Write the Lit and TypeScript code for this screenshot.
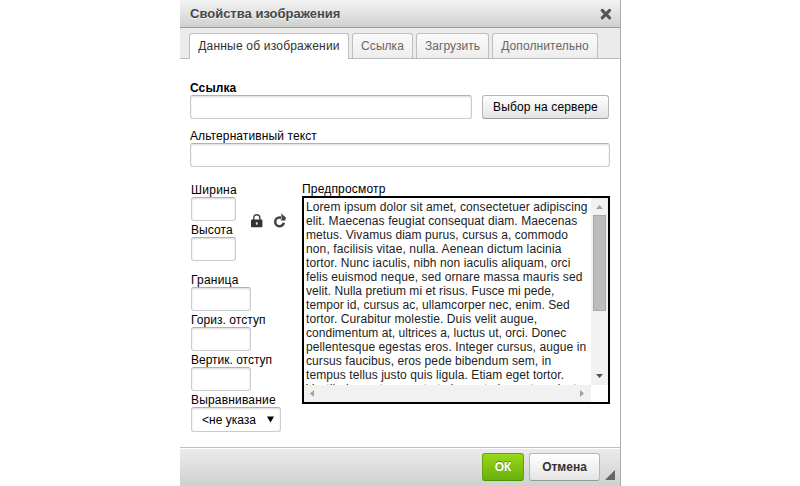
import { LitElement, html, css } from "lit";
import { customElement, property } from "lit/decorators.js";

const TABS = [
  { label: "Данные об изображении", width: 160, active: true, spacing: 0.2 },
  { label: "Ссылка", width: 61, active: false, spacing: 0.05 },
  { label: "Загрузить", width: 73, active: false, spacing: 0 },
  { label: "Дополнительно", width: 106, active: false, spacing: 0.09 },
];

const PREVIEW: [string, number][] = [
  ["Lorem ipsum dolor sit amet, consectetuer adipiscing", 4.7],
  ["elit. Maecenas feugiat consequat diam. Maecenas", 4.5],
  ["metus. Vivamus diam purus, cursus a, commodo", 2.7],
  ["non, facilisis vitae, nulla. Aenean dictum lacinia", 6],
  ["tortor. Nunc iaculis, nibh non iaculis aliquam, orci", 5],
  ["felis euismod neque, sed ornare massa mauris sed", 5],
  ["velit. Nulla pretium mi et risus. Fusce mi pede,", 3],
  ["tempor id, cursus ac, ullamcorper nec, enim. Sed", 3],
  ["tortor. Curabitur molestie. Duis velit augue,", 4.5],
  ["condimentum at, ultrices a, luctus ut, orci. Donec", 1.5],
  ["pellentesque egestas eros. Integer cursus, augue in", 4.7],
  ["cursus faucibus, eros pede bibendum sem, in", 3.7],
  ["tempus tellus justo quis ligula. Etiam eget tortor.", 4],
  ["Vestibulum rutrum, est ut placerat elementum, lectus", 4],
];

@customElement("text-field")
export class TextField extends LitElement {
  @property() label = "";
  @property({ type: Number }) width = 60;
  @property({ type: Number }) spacing = 0;
  @property({ type: Boolean }) strong = false;

  static styles = css`
    :host { display: block; }
    .label { height: 14px; line-height: 14px; white-space: nowrap; }
    .strong { font-weight: bold; }
    .box {
      box-sizing: border-box;
      height: 24px;
      border: 1px solid #c9cccf;
      border-top-color: #aeb3b9;
      border-radius: 3px;
      background: #fff;
      box-shadow: 0 1px 2px rgba(0, 0, 0, 0.15) inset;
    }
  `;

  render() {
    return html`
      <div class="label ${this.strong ? "strong" : ""}" style="letter-spacing:${this.spacing}px">${this.label}</div>
      <div class="box" style="width:${this.width}px"></div>
    `;
  }
}

@customElement("preview-box")
export class PreviewBox extends LitElement {
  static styles = css`
    :host {
      display: grid;
      grid-template: 187px 17px / 287px 17px;
      border: 2px solid #000;
      background: #fff;
      width: 304px;
    }
    .text { overflow: hidden; padding: 2px 0 0 2px; height: 185px; }
    .line { height: 14px; line-height: 14px; white-space: nowrap; color: #222; }
    .vbar, .hbar { background: #f1f1f1; display: flex; align-items: center; justify-content: space-between; }
    .vbar { flex-direction: column; }
    .thumb { box-sizing: border-box; width: 13px; height: 96px; background: #bcbcbc; border: 1px solid #a8a8a8; margin-bottom: 57px; }
    svg { display: block; }
  `;

  render() {
    return html`
      <div class="text">
        ${PREVIEW.map(([t, extra]) => html`<div class="line" style="letter-spacing:${(extra / t.length).toFixed(3)}px">${t}</div>`)}
      </div>
      <div class="vbar">
        <svg width="17" height="17"><path d="M5 11 L8.5 7 L12 11Z" fill="#a3a3a3" /></svg>
        <div class="thumb"></div>
        <svg width="17" height="17"><path d="M5 6 H12 L8.5 10Z" fill="#505050" /></svg>
      </div>
      <div class="hbar">
        <svg width="17" height="17"><path d="M10 5 V12 L6 8.5Z" fill="#a3a3a3" /></svg>
        <svg width="17" height="17"><path d="M6 5 V12 L10 8.5Z" fill="#a3a3a3" /></svg>
      </div>
    `;
  }
}

@customElement("app-root")
export class AppRoot extends LitElement {
  static styles = css`
    :host {
      display: block;
      width: 800px;
      height: 486px;
      overflow: hidden;
      background: #fff;
      color: #000;
      font: 12px "Liberation Sans", Arial, sans-serif;
    }
    .dialog {
      box-sizing: border-box;
      width: 441px;
      height: 486px;
      margin-left: 180px;
      border-right: 1px solid #aaa;
      display: flex;
      flex-direction: column;
    }
    .title {
      box-sizing: border-box;
      height: 28px;
      flex: none;
      padding: 0 8px 0 10px;
      display: flex;
      align-items: center;
      justify-content: space-between;
      border-bottom: 1px solid #999;
      background: linear-gradient(#f3f3f3, #cfd1cf);
      color: #474747;
      font-weight: bold;
      font-size: 13px;
      text-shadow: 0 1px 0 rgba(255, 255, 255, 0.75);
    }
    .tabs {
      box-sizing: border-box;
      height: 31px;
      flex: none;
      padding: 5px 0 0 9px;
      display: flex;
      gap: 3px;
      background: #ebebeb;
      border-bottom: 1px solid #b9b9b9;
    }
    .tab {
      box-sizing: border-box;
      height: 25px;
      line-height: 24px;
      text-align: center;
      white-space: nowrap;
      border: 1px solid #bfbfbf;
      border-bottom: 0;
      border-radius: 3px 3px 0 0;
      background: linear-gradient(#fafafa, #ededed);
      color: #676767;
    }
    .active { height: 26px; background: #fff; color: #303030; }
    .body { flex: 1; padding: 22px 10px 0; }
    .row { display: flex; align-items: flex-end; justify-content: space-between; }
    .browse {
      box-sizing: border-box;
      width: 127px;
      height: 24px;
      margin-right: 1px;
      line-height: 22px;
      text-align: center;
      letter-spacing: 0.15px;
      border: 1px solid #b6b6b6;
      border-bottom-color: #999;
      border-radius: 3px;
      background: linear-gradient(#fff, #e4e4e4);
      white-space: nowrap;
    }
    .alt { margin-top: 10px; }
    .columns { display: flex; margin-top: 15px; }
    .left { width: 111px; padding: 1px 0 0 1px; }
    .size { display: flex; gap: 15px; }
    .size .stack { width: 45px; }
    .stack { display: flex; flex-direction: column; gap: 2px; }
    .icons { display: flex; gap: 10px; padding-top: 30px; }
    .more { margin-top: 12px; }
    .label { height: 14px; line-height: 14px; white-space: nowrap; letter-spacing: 0.18px; }
    .select {
      box-sizing: border-box;
      width: 90px;
      height: 25px;
      padding: 0 6px 0 10px;
      display: flex;
      align-items: center;
      justify-content: space-between;
      border: 1px solid #c9cccf;
      border-top-color: #aeb3b9;
      border-radius: 3px;
      box-shadow: 0 1px 2px rgba(0, 0, 0, 0.15) inset;
    }
    .footer {
      box-sizing: border-box;
      height: 39px;
      flex: none;
      padding: 5px 5px 0 0;
      display: flex;
      justify-content: flex-end;
      border-top: 1px solid #bfbfbf;
      background: linear-gradient(#ebebeb, #cfd1cf);
      box-shadow: 0 1px 0 #fff inset;
      font-weight: bold;
    }
    .button {
      box-sizing: border-box;
      height: 28px;
      line-height: 26px;
      text-align: center;
      border: 1px solid #b6b6b6;
      border-bottom-color: #999;
      border-radius: 3px;
    }
    .ok {
      width: 42px;
      margin-right: 5px;
      border-color: #62a60a #62a60a #4d9200;
      background: linear-gradient(#9ad717, #69b10b);
      color: #fff;
      text-shadow: 0 -1px 0 #55830c;
    }
    .cancel { width: 71px; margin-right: 5px; background: linear-gradient(#fff, #e4e4e4); color: #333; }
    .grip { margin-top: 17px; }
    svg { display: block; flex: none; }
  `;

  render() {
    return html`
      <div class="dialog">
        <div class="title">
          <span>Свойства изображения</span>
          <svg width="12" height="12"><path d="M2.2 2.4 L9.6 9.8 M9.6 2.4 L2.2 9.8" stroke="#555" stroke-width="3.1" stroke-linecap="round" /></svg>
        </div>
        <div class="tabs">
          ${TABS.map(
            (t) => html`<div class="tab ${t.active ? "active" : ""}" style="width:${t.width}px;letter-spacing:${t.spacing}px">${t.label}</div>`
          )}
        </div>
        <div class="body">
          <div class="row">
            <text-field label="Ссылка" width="282" spacing="0.1" strong></text-field>
            <div class="browse">Выбор на сервере</div>
          </div>
          <text-field class="alt" label="Альтернативный текст" width="420" spacing="0.1"></text-field>
          <div class="columns">
            <div class="left">
              <div class="size">
                <div class="stack">
                  <text-field label="Ширина" width="45" spacing="0.25"></text-field>
                  <text-field label="Высота" width="45" spacing="0.1"></text-field>
                </div>
                <div class="icons">
                  <svg width="12" height="16">
                    <path d="M2.8 8 V4.8 a3 3 0 0 1 6 0 V8" fill="none" stroke="#444" stroke-width="1.4" />
                    <rect x="0" y="6.6" width="11.4" height="7.6" rx="0.8" fill="#333" />
                    <path d="M5.8 9 V12 M4.8 10.3 H6.8" stroke="#ddd" stroke-width="1.2" />
                  </svg>
                  <svg width="15" height="16">
                    <path d="M8.4 4.4 H6.4 A4.4 4.4 0 1 0 10.9 9.8" fill="none" stroke="#444" stroke-width="2.5" />
                    <path d="M8 0.2 L12.8 4.6 L12.4 7.4 L7.4 7.4 L9 5.4Z" fill="#444" />
                  </svg>
                </div>
              </div>
              <div class="stack more">
                <text-field label="Граница" width="60" spacing="0.22"></text-field>
                <text-field label="Гориз. отступ" width="60" spacing="0.06"></text-field>
                <text-field label="Вертик. отступ" width="60" spacing="0"></text-field>
                <div>
                  <div class="label">Выравнивание</div>
                  <div class="select">
                    <span>&lt;не указа</span>
                    <svg width="7" height="7"><path d="M0 0.5 H7 L3.5 6.5Z" fill="#000" /></svg>
                  </div>
                </div>
              </div>
            </div>
            <div>
              <div class="label">Предпросмотр</div>
              <preview-box></preview-box>
            </div>
          </div>
        </div>
        <div class="footer">
          <div class="button ok">ОК</div>
          <div class="button cancel">Отмена</div>
          <svg class="grip" width="10" height="10"><path d="M10 0 V10 H0Z" fill="#666" /></svg>
        </div>
      </div>
    `;
  }
}
